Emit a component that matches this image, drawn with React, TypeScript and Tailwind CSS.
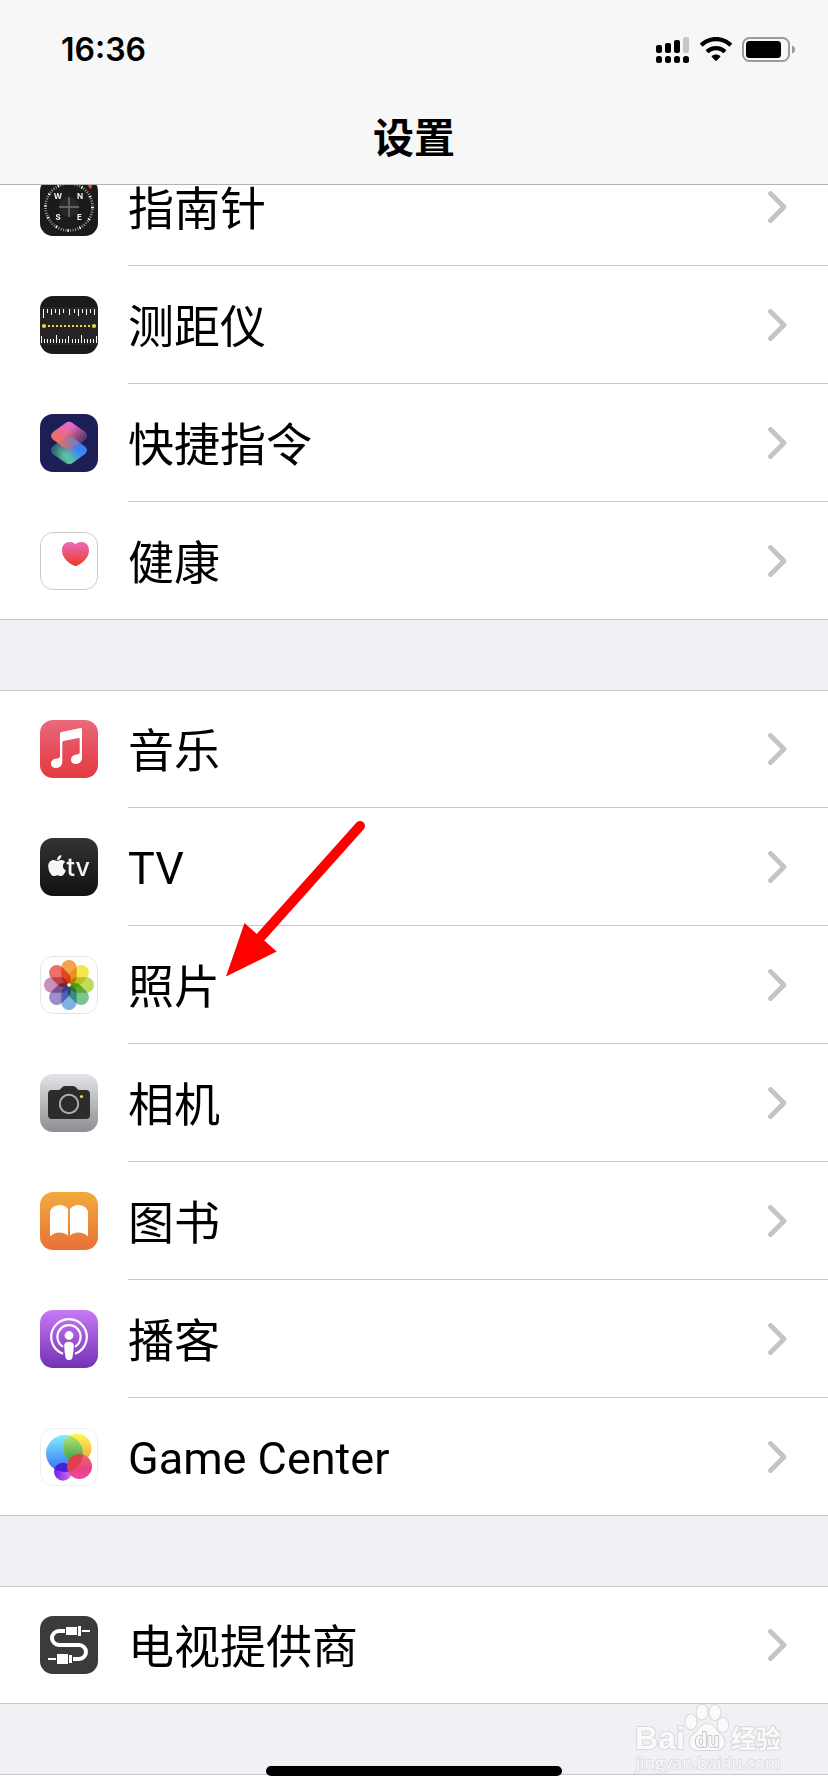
import React from 'react'
import { FaApple } from 'react-icons/fa'

interface RowProps {
  icon: React.ReactNode
  label: string
  latin?: boolean
  last?: boolean
  children?: React.ReactNode
}

const ICON = 'h-[58px] w-[58px] shrink-0 overflow-hidden rounded-[13px]'

const CompassIcon = () => (
  <svg viewBox="0 0 58 58" className={ICON} aria-hidden="true">
    <rect width="58" height="58" fill="#1b1b1c" />
    <circle cx="29" cy="29" r="23.5" fill="none" stroke="#a5a5a5" strokeWidth="2.6" strokeDasharray="0.9 1.561" />
    <circle cx="29" cy="29" r="23.5" fill="none" stroke="#ffffff" strokeWidth="2.8" strokeDasharray="1.3 11.004" />
    <circle cx="29" cy="29" r="10" fill="#272727" />
    <path d="M29 19v20M19 29h20" stroke="#636363" strokeWidth="1.8" />
    <path d="M46.5 5.500l7-1-3 7z" fill="#ee4b3c" />
    <g fill="#f2f2f2" fontSize="8" fontWeight="700" textAnchor="middle" fontFamily="Inter, sans-serif">
      <text x="18" y="21">W</text>
      <text x="40" y="21">N</text>
      <text x="18" y="42">S</text>
      <text x="39.5" y="42">E</text>
    </g>
  </svg>
)

const MeasureIcon = () => {
  const dots = [8, 12, 16, 20, 24, 28, 32, 36, 40, 44, 48]
  return (
    <svg viewBox="0 0 58 58" className={ICON} aria-hidden="true">
      <rect width="58" height="58" fill="#1a1a1b" />
      <rect y="11" width="58" height="38" fill="#242425" />
      <path
        d="M3.5 13v9M7.5 13v4M11.5 13v6M15.5 13v4M19.5 13v6M23.5 13v4M29.5 13v6M34.5 13v4M38.5 13v7M42.5 13v4M46.5 13v6M50.5 13v4M54.5 13v6"
        stroke="#fff"
        strokeWidth="1"
      />
      <path
        d="M1.5 47v-7M4.5 47v-4M7.5 47v-4M10.5 47v-4M13.5 47v-4M16.5 47v-8M19.5 47v-4M22.5 47v-4M25.5 47v-4M28.5 47v-7M32.5 47v-4M35.5 47v-4M38.5 47v-4M41.5 47v-8M44.5 47v-4M47.5 47v-4M50.5 47v-4M53.5 47v-4M56.5 47v-7"
        stroke="#fff"
        strokeWidth="1"
      />
      <g fill="#f7ce46">
        <circle cx="4" cy="30" r="2.1" />
        <circle cx="54" cy="30" r="2.1" />
        {dots.map((x) => (
          <rect key={x} x={x} y="29" width="2" height="2" />
        ))}
      </g>
    </svg>
  )
}

const upperTile =
  'M25.5 8.9Q29 6.5 32.5 8.9L45 18.1Q49 21.9 45 25.6L32.5 34.8Q29 37.2 25.5 34.8L13 25.6Q9 21.9 13 18.1Z'
const lowerTile =
  'M25.5 23.2Q29 20.8 32.5 23.2L45 32.4Q49 36.1 45 39.9L32.5 49.1Q29 51.5 25.5 49.1L13 39.9Q9 36.1 13 32.4Z'

const ShortcutsIcon = () => (
  <svg viewBox="0 0 58 58" className={ICON} aria-hidden="true">
    <defs>
      <linearGradient id="sc-low" x1="0.15" y1="0.8" x2="0.85" y2="0.3">
        <stop offset="0" stopColor="#3f8f8a" />
        <stop offset="0.3" stopColor="#5cc79c" />
        <stop offset="0.75" stopColor="#3d86f2" />
        <stop offset="1" stopColor="#3a7df5" />
      </linearGradient>
      <linearGradient id="sc-shade" x1="0" y1="0.2" x2="0.45" y2="0.6">
        <stop offset="0" stopColor="#1c1f55" stopOpacity="0.8" />
        <stop offset="1" stopColor="#1c1f55" stopOpacity="0" />
      </linearGradient>
      <linearGradient id="sc-top" x1="0.6" y1="0" x2="0.3" y2="1">
        <stop offset="0" stopColor="#e566e0" />
        <stop offset="0.6" stopColor="#ee6c6b" />
        <stop offset="1" stopColor="#f0785a" />
      </linearGradient>
      <linearGradient id="sc-fade" x1="0.5" y1="0.3" x2="1" y2="0.6">
        <stop offset="0" stopColor="#2b2a68" stopOpacity="0" />
        <stop offset="1" stopColor="#2b2a68" stopOpacity="0.85" />
      </linearGradient>
      <linearGradient id="sc-mid" x1="0" y1="0.6" x2="1" y2="0.4">
        <stop offset="0.1" stopColor="#ee7059" />
        <stop offset="0.9" stopColor="#3f82ee" />
      </linearGradient>
      <clipPath id="sc-clip">
        <path d={lowerTile} />
      </clipPath>
    </defs>
    <rect width="58" height="58" fill="#1c1f55" />
    <path d={lowerTile} fill="url(#sc-low)" />
    <path d={lowerTile} fill="url(#sc-shade)" />
    <path d={upperTile} fill="url(#sc-top)" />
    <path d={upperTile} fill="url(#sc-fade)" />
    <g clipPath="url(#sc-clip)">
      <path d={upperTile} fill="url(#sc-mid)" />
    </g>
  </svg>
)

const HealthIcon = () => (
  <svg viewBox="0 0 58 58" className={ICON} aria-hidden="true">
    <defs>
      <linearGradient id="heart" x1="0" y1="0" x2="0" y2="1">
        <stop offset="0" stopColor="#ea6cbc" />
        <stop offset="1" stopColor="#ec3b22" />
      </linearGradient>
    </defs>
    <rect x="0.5" y="0.5" width="57" height="57" rx="12.5" fill="#fff" stroke="#c8c8ca" />
    <path
      d="M35.5 12.2C37 10.6 39.2 10 41.5 10C46 10 49 13.5 49 18.2C49 26 42 31.5 36.8 33.8Q35.5 34.4 34.2 33.8C29 31.5 22 26 22 18.2C22 13.5 25 10 29.5 10C31.8 10 34 10.6 35.5 12.2Z"
      fill="url(#heart)"
    />
  </svg>
)

const MusicIcon = () => (
  <svg viewBox="0 0 58 58" className={ICON} aria-hidden="true">
    <defs>
      <linearGradient id="music" x1="0" y1="0" x2="0" y2="1">
        <stop offset="0" stopColor="#e96a7b" />
        <stop offset="0.5" stopColor="#e64f5c" />
        <stop offset="1" stopColor="#e53a42" />
      </linearGradient>
    </defs>
    <rect width="58" height="58" fill="url(#music)" />
    <path
      d="M21.5 12L40.5 8Q42 7.8 42 9.2V37.5C42 41.5 39.5 44 35.5 44C32.5 44 31 42 31 39.7C31 37 33 35.3 35.5 34.8L38 34.3Q39.7 34 39.7 32.2V19Q39.7 17.8 38.5 18L23.5 21Q22.3 21.3 22.3 22.5V41.5C22.3 45.5 19.8 48 15.8 48C12.8 48 11 46.2 11 43.7C11 41 13 39.3 15.5 38.8L18.2 38.3Q20 38 20 36.2V13.8Q20 12.3 21.5 12Z"
      fill="#fff"
    />
  </svg>
)

const TvIcon = () => (
  <svg viewBox="0 0 58 58" className={ICON} aria-hidden="true">
    <defs>
      <linearGradient id="tv" x1="0" y1="0" x2="0" y2="1">
        <stop offset="0" stopColor="#333333" />
        <stop offset="1" stopColor="#111111" />
      </linearGradient>
    </defs>
    <rect width="58" height="58" fill="url(#tv)" />
    <FaApple x="5" y="15.5" size={24} color="#f6f6f6" />
    <text x="26.5" y="38" fontSize="25" fontWeight="500" fill="#f6f6f6" fontFamily="Inter, sans-serif">tv</text>
  </svg>
)

const petals = [
  { angle: 0, fill: '#f2a24c' },
  { angle: 45, fill: '#f6e44c' },
  { angle: 90, fill: '#bddb5c' },
  { angle: 135, fill: '#78c590' },
  { angle: 180, fill: '#7db2e2' },
  { angle: 225, fill: '#9c8ecb' },
  { angle: 270, fill: '#cb8fbd' },
  { angle: 315, fill: '#ec7268' },
]

const PhotosIcon = () => (
  <svg viewBox="0 0 58 58" className={ICON} aria-hidden="true">
    <rect x="0.5" y="0.5" width="57" height="57" rx="12.5" fill="#fff" stroke="#e4e4e6" />
    {petals.map(({ angle, fill }) => (
      <rect
        key={angle}
        x="21.3"
        y="4"
        width="15.4"
        height="24.5"
        rx="7.7"
        fill={fill}
        transform={`rotate(${angle} 29 29)`}
        className="mix-blend-multiply"
      />
    ))}
    <circle cx="29" cy="29" r="1.8" fill="#fff" />
  </svg>
)

const CameraIcon = () => (
  <svg viewBox="0 0 58 58" className={ICON} aria-hidden="true">
    <defs>
      <linearGradient id="camera" x1="0" y1="0" x2="0" y2="1">
        <stop offset="0" stopColor="#e3e3e8" />
        <stop offset="1" stopColor="#8e8d92" />
      </linearGradient>
    </defs>
    <rect width="58" height="58" fill="url(#camera)" />
    <path
      d="M12 16h6.5q1.5 0 2.3-1.3Q22.3 12 25 12h8q2.7 0 4.2 2.7Q38 16 39.5 16H46q4 0 4 4v21q0 4-4 4H12q-4 0-4-4V20q0-4 4-4z"
      fill="#2c2c2c"
    />
    <circle cx="29" cy="30" r="9.2" fill="none" stroke="#aeadb3" strokeWidth="1.9" />
    <circle cx="41.5" cy="22.5" r="1.6" fill="#f7ce46" />
  </svg>
)

const BooksIcon = () => (
  <svg viewBox="0 0 58 58" className={ICON} aria-hidden="true">
    <defs>
      <linearGradient id="books" x1="0" y1="0" x2="0" y2="1">
        <stop offset="0" stopColor="#f2ab3d" />
        <stop offset="1" stopColor="#e87138" />
      </linearGradient>
    </defs>
    <rect width="58" height="58" fill="url(#books)" />
    <path
      d="M10 19Q13 13 19.5 13Q25 13 28 17V43.5Q24.5 40.5 19.5 40.5Q14.5 40.5 11 43.8Q10 44.5 10 43.3ZM48 19Q45 13 38.5 13Q33 13 30 17V43.5Q33.5 40.5 38.5 40.5Q43.5 40.5 47 43.8Q48 44.5 48 43.3Z"
      fill="#fff"
    />
  </svg>
)

const PodcastsIcon = () => (
  <svg viewBox="0 0 58 58" className={ICON} aria-hidden="true">
    <defs>
      <linearGradient id="podcasts" x1="0" y1="0" x2="0" y2="1">
        <stop offset="0" stopColor="#c779f5" />
        <stop offset="1" stopColor="#7431b5" />
      </linearGradient>
    </defs>
    <rect width="58" height="58" fill="url(#podcasts)" />
    <g fill="none" stroke="#fff" strokeWidth="2.2">
      <path d="M23 43.7A17.8 17.8 0 1 1 35 43.7" />
      <path d="M23 36.7A11.6 11.6 0 1 1 35 36.7" />
    </g>
    <circle cx="29" cy="25.5" r="4.4" fill="#fff" />
    <path d="M24.2 35.5Q24.2 31.7 29 31.7Q33.8 31.7 33.8 35.5Q33.8 41 32.5 47.2Q32 50 29 50Q26 50 25.5 47.2Q24.2 41 24.2 35.5Z" fill="#fff" />
  </svg>
)

const GameCenterIcon = () => (
  <svg viewBox="0 0 58 58" className={ICON} aria-hidden="true">
    <defs>
      <linearGradient id="gc-blue" x1="0" y1="0" x2="0" y2="1">
        <stop offset="0" stopColor="#83effd" />
        <stop offset="1" stopColor="#2f6df4" />
      </linearGradient>
      <linearGradient id="gc-yellow" x1="0" y1="0" x2="0" y2="1">
        <stop offset="0" stopColor="#fef94f" />
        <stop offset="1" stopColor="#f1a13c" />
      </linearGradient>
      <linearGradient id="gc-green" x1="0" y1="0" x2="0" y2="1">
        <stop offset="0" stopColor="#c3e66b" />
        <stop offset="1" stopColor="#2f9f52" />
      </linearGradient>
      <linearGradient id="gc-red" x1="0" y1="0" x2="0" y2="1">
        <stop offset="0" stopColor="#ee6a5c" />
        <stop offset="0.6" stopColor="#ec3f8a" />
        <stop offset="1" stopColor="#ee4a96" />
      </linearGradient>
      <linearGradient id="gc-purple" x1="0" y1="0" x2="1" y2="0">
        <stop offset="0" stopColor="#7220f0" />
        <stop offset="1" stopColor="#d673e6" />
      </linearGradient>
      <clipPath id="gc-clip">
        <circle cx="24.5" cy="25.5" r="18.5" />
      </clipPath>
    </defs>
    <rect x="0.5" y="0.5" width="57" height="57" rx="12.5" fill="#fff" stroke="#efeff0" />
    <circle cx="23" cy="43.7" r="9" fill="url(#gc-purple)" />
    <circle cx="24.5" cy="25.5" r="18.5" fill="url(#gc-blue)" />
    <circle cx="37.2" cy="20" r="14.3" fill="url(#gc-yellow)" />
    <circle cx="39.5" cy="38.5" r="12.5" fill="url(#gc-red)" />
    <g clipPath="url(#gc-clip)">
      <circle cx="23" cy="43.7" r="9" fill="#4a1fd6" />
      <circle cx="37.2" cy="20" r="14.3" fill="url(#gc-green)" />
      <circle cx="39.5" cy="38.5" r="12.5" fill="#e2404f" />
    </g>
  </svg>
)

const TvProviderIcon = () => (
  <svg viewBox="0 0 58 58" className={ICON} aria-hidden="true">
    <rect width="58" height="58" fill="#3b3b3b" />
    <path d="M25 15H19a7 7 0 0 0 0 14H39a7 7 0 0 1 0 14H33" fill="none" stroke="#fff" strokeWidth="4" />
    <path
      d="M26 11h11v8H26zM38 10h3v10h-3zM42 14h8v2h-8zM8 42h8v2H8zM17 38h11v10H17zM29 39h3v8h-3z"
      fill="#fff"
    />
  </svg>
)

const Chevron = () => (
  <svg viewBox="0 0 20 34" className="h-[34px] w-[20px] shrink-0" aria-hidden="true">
    <path d="M3.5 3.5L17 17L3.5 30.5" fill="none" stroke="#c4c4c6" strokeWidth="4.8" strokeLinecap="round" strokeLinejoin="round" />
  </svg>
)

const Row = ({ icon, label, latin, last, children }: RowProps) => (
  <li className={`relative h-[118px] ${last ? 'border-b border-[#c8c7cc]' : ''}`}>
    <a href="#" className="flex h-full items-center gap-[30px] pl-10 text-black">
      {icon}
      <span className={`flex h-full flex-1 items-center justify-between pr-[41px] ${last ? '' : 'border-b border-[#c8c7cc]'}`}>
        <span className={latin ? "pt-1 font-['Roboto',sans-serif] text-[45px] leading-[60px]" : 'pt-0.5 text-[46px] leading-[60px]'}>
          {label}
        </span>
        <Chevron />
      </span>
    </a>
    {children}
  </li>
)

const Group = ({ children }: { children: React.ReactNode }) => (
  <ul className="bg-white shadow-[inset_0_1px_0_#c8c7cc]">{children}</ul>
)

// Red pointer that ends beside the Photos label
const Pointer = () => (
  <svg viewBox="0 0 142 158" className="pointer-events-none absolute bottom-[66px] left-[225px] z-10 h-[158px] w-[142px]" aria-hidden="true">
    <path d="M135 6L28 125.7" stroke="#fe0000" strokeWidth="10" strokeLinecap="round" />
    <path d="M1 156.5L19.5 103L51.7 131.5Z" fill="#fe0000" />
  </svg>
)

const StatusIcons = () => (
  <div className="flex items-center">
    <svg viewBox="0 0 33 26" className="mr-[11px] h-[26px] w-[33px]" aria-label="信号">
      <rect x="0" y="8" width="6" height="8" rx="2" />
      <rect x="9" y="6" width="6" height="10" rx="2" />
      <rect x="18" y="3" width="6" height="13" rx="2" />
      <rect x="27" y="0" width="6" height="16" rx="2" fill="#c6c6c6" />
      <rect x="0" y="19" width="6" height="7" rx="2.5" />
      <rect x="9" y="19" width="6" height="7" rx="2.5" />
      <rect x="18" y="19" width="6" height="7" rx="2.5" />
      <rect x="27" y="19" width="6" height="7" rx="2.5" />
    </svg>
    <svg viewBox="0 0 32 26" className="mr-[10px] h-[26px] w-[32px]" aria-label="Wi-Fi">
      <path d="M16 0C22.2 0 27.8 2.4 31.8 6.3Q32.2 6.8 31.8 7.3L29.8 9.3Q29.3 9.7 28.8 9.3C25.4 6.1 20.9 4.3 16 4.3S6.6 6.1 3.2 9.3Q2.7 9.7 2.2 9.3L0.2 7.3Q-0.2 6.8 0.2 6.3C4.2 2.4 9.8 0 16 0Z" />
      <path d="M16 9C19.9 9 23.4 10.4 26 12.8Q26.5 13.3 26 13.8L23.9 15.9Q23.4 16.3 22.9 15.9C21.1 14.2 18.7 13.3 16 13.3S10.9 14.2 9.1 15.9Q8.6 16.3 8.1 15.9L6 13.8Q5.5 13.3 6 12.8C8.6 10.4 12.1 9 16 9Z" />
      <path d="M16 17.5C17.6 17.5 19 18 20.2 19Q20.6 19.5 20.2 20L16.5 23.7Q16 24.2 15.5 23.7L11.8 20Q11.4 19.5 11.8 19C13 18 14.4 17.5 16 17.5Z" />
    </svg>
    <svg viewBox="0 0 53 26" className="h-[26px] w-[53px]" aria-label="电池">
      <rect x="1" y="1" width="46" height="23" rx="6.5" fill="none" stroke="#9b9b9b" strokeWidth="2" />
      <rect x="4" y="4" width="35" height="17" rx="3.5" />
      <path d="M50 8.5q3 1 3 4t-3 4z" fill="#9b9b9b" />
    </svg>
  </div>
)

const Watermark = () => (
  <svg viewBox="0 0 158 80" className="pointer-events-none absolute right-[40px] bottom-[12px] h-[80px] w-[158px]" aria-label="Baidu 经验">
    <g fill="#fafafa" stroke="#d8d8dc" strokeWidth="2" strokeLinejoin="round" paintOrder="stroke">
      <ellipse cx="61" cy="22" rx="5.5" ry="7.5" />
      <ellipse cx="72" cy="12" rx="5.5" ry="7.5" />
      <ellipse cx="85" cy="12.5" rx="5.5" ry="7.5" />
      <ellipse cx="93" cy="25" rx="5.5" ry="7" />
      <path d="M77 24C84 24 86 31 91 35C96 39 96 50 86 50H68C58 50 58 39 63 35C69 31 70 24 77 24Z" />
      <text x="5" y="49" fontSize="32" fontWeight="700" fontFamily="'Liberation Sans', sans-serif">Bai</text>
      <text x="65" y="47" fontSize="20" fontWeight="700" fontFamily="'Liberation Sans', sans-serif" stroke="#c6c6ca">du</text>
      <text x="101" y="48" fontSize="25" fontWeight="700" fontFamily="'Noto Sans CJK SC', sans-serif">经验</text>
      <text x="6" y="69" fontSize="17" fontFamily="'Open Sans', sans-serif" stroke="#dedee2">jingyan.baidu.com</text>
    </g>
  </svg>
)

export default function App() {
  return (
    <div className="relative flex min-h-screen flex-col overflow-hidden bg-[#f0f0f5] font-['Inter','Noto_Sans_CJK_SC',sans-serif] text-black">
      <header className="fixed inset-x-0 top-0 z-20 border-b border-[#b2b2b2] bg-[#f7f7f7]">
        <div className="flex h-[100px] items-center justify-between pr-[33px] pl-[61px]">
          <time className="text-[32px] leading-10 font-semibold">16:36</time>
          <StatusIcons />
        </div>
        <h1 className="h-[84px] text-center text-[41px] leading-[76px] font-bold">设置</h1>
      </header>

      <main className="flex flex-1 flex-col gap-[70px] pt-[148px]">
        <Group>
          <Row icon={<CompassIcon />} label="指南针" />
          <Row icon={<MeasureIcon />} label="测距仪" />
          <Row icon={<ShortcutsIcon />} label="快捷指令" />
          <Row icon={<HealthIcon />} label="健康" last />
        </Group>
        <Group>
          <Row icon={<MusicIcon />} label="音乐" />
          <Row icon={<TvIcon />} label="TV" latin />
          <Row icon={<PhotosIcon />} label="照片">
            <Pointer />
          </Row>
          <Row icon={<CameraIcon />} label="相机" />
          <Row icon={<BooksIcon />} label="图书" />
          <Row icon={<PodcastsIcon />} label="播客" />
          <Row icon={<GameCenterIcon />} label="Game Center" latin last />
        </Group>
        <Group>
          <Row icon={<TvProviderIcon />} label="电视提供商" last />
        </Group>
        <div className="min-h-[18px] flex-1 border-t border-[#c8c7cc] bg-white" />
      </main>

      <Watermark />
      <div className="fixed bottom-4 left-1/2 h-[10px] w-[296px] -translate-x-1/2 rounded-full bg-black" />
    </div>
  )
}
